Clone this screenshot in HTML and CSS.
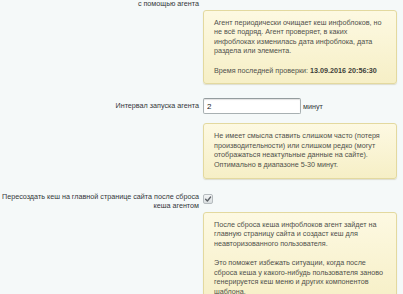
FILE: index.html
```html
<!DOCTYPE html>
<html lang="ru">
<head>
<meta charset="utf-8">
<link rel="stylesheet" href="styles.css">
</head>
<body>
<div class="form">
  <div class="row row-first">
    <div class="label">с помощью агента</div>
    <div class="field"></div>
  </div>
  <div class="row">
    <div class="label"></div>
    <div class="note">
      <p>Агент периодически очищает кеш инфоблоков, но не всё подряд. Агент проверяет, в каких инфоблоках изменилась дата инфоблока, дата раздела или элемента.</p>
      <p>Время последней проверки: <b>13.09.2016 20:56:30</b></p>
    </div>
  </div>
  <div class="row row-input">
    <div class="label label-mid">Интервал запуска агента</div>
    <div class="field field-input"><input class="text" type="text" value="2"><span class="unit">минут</span></div>
  </div>
  <div class="row row-note2">
    <div class="label"></div>
    <div class="note">
      <p>Не имеет смысла ставить слишком часто (потеря производительности) или слишком редко (могут отображаться неактульные данные на сайте). Оптимально в диапазоне 5-30 минут.</p>
    </div>
  </div>
  <div class="row row-check">
    <div class="label">Пересоздать кеш на главной странице сайта после сброса кеша агентом</div>
    <div class="field"><span class="checkbox"><svg viewBox="0 0 10 10" width="10" height="10"><path d="M2.6 5.2 L4.4 7 L7.6 3" fill="none" stroke="#5c6166" stroke-width="1.3" stroke-linecap="round" stroke-linejoin="round"/></svg></span></div>
  </div>
  <div class="row">
    <div class="label"></div>
    <div class="note">
      <p>После сброса кеша инфоблоков агент зайдет на главную страницу сайта и создаст кеш для неавторизованного пользователя.</p>
      <p>Это поможет избежать ситуации, когда после сброса кеша у какого-нибудь пользователя заново генерируется кеш меню и других компонентов шаблона.</p>
    </div>
  </div>
</div>
</body>
</html>
```
FILE: styles.css
```css
html, body {
  margin: 0;
  padding: 0;
  background: #f5f9f9;
  height: 100%;
  overflow: hidden;
}
body {
  font-family: "Liberation Sans", Arial, sans-serif;
  font-size: 7.2px;
  line-height: 9.6px;
  color: #33373a;
}
.form {
  display: flex;
  flex-direction: column;
  padding: 0 6px 0 0;
}
.row {
  display: grid;
  grid-template-columns: 200px 1fr;
  column-gap: 3px;
  align-items: start;
}
.row-first {
  margin-top: -1px;
}
.row-input {
  margin-top: 14px;
  align-items: center;
}
.row-note2 {
  margin-top: 8px;
}
.row-check {
  margin-top: 13px;
}
.label {
  text-align: right;
  padding-right: 1px;
  color: #33373a;
}
.note {
  margin-top: 1px;
  padding: 7px 13px 8px 10px;
  border: 1px solid #e3d99f;
  border-radius: 3px;
  background: linear-gradient(to bottom, #fdf9e2 0%, #f6efc6 100%);
  box-shadow: 0 1px 1px rgba(150, 140, 80, 0.25);
  color: #50514b;
}
.note p {
  margin: 0;
}
.note p + p {
  margin-top: 9.6px;
}
.note b {
  color: #3e3f3a;
}
.field-input {
  display: flex;
  align-items: center;
}
.text {
  box-sizing: border-box;
  width: 98px;
  height: 16px;
  margin: 0;
  padding: 0 3px;
  border: 1px solid #a8b0b2;
  border-top-color: #949c9e;
  border-radius: 2px;
  background: #fff;
  box-shadow: inset 0 1px 1px rgba(0, 0, 0, 0.12);
  font-family: "Liberation Sans", Arial, sans-serif;
  font-size: 8px;
  color: #222;
  outline: none;
}
.unit {
  margin-left: 2px;
  margin-top: 2px;
  color: #33373a;
}
.checkbox {
  display: block;
  width: 10px;
  height: 10px;
  margin-top: 2px;
  box-sizing: border-box;
  border: 1px solid #b6bcbf;
  border-radius: 2px;
  background: linear-gradient(to bottom, #f3f5f6, #d9dee0);
}
.checkbox svg {
  display: block;
  margin: -1px 0 0 -1px;
}
```
